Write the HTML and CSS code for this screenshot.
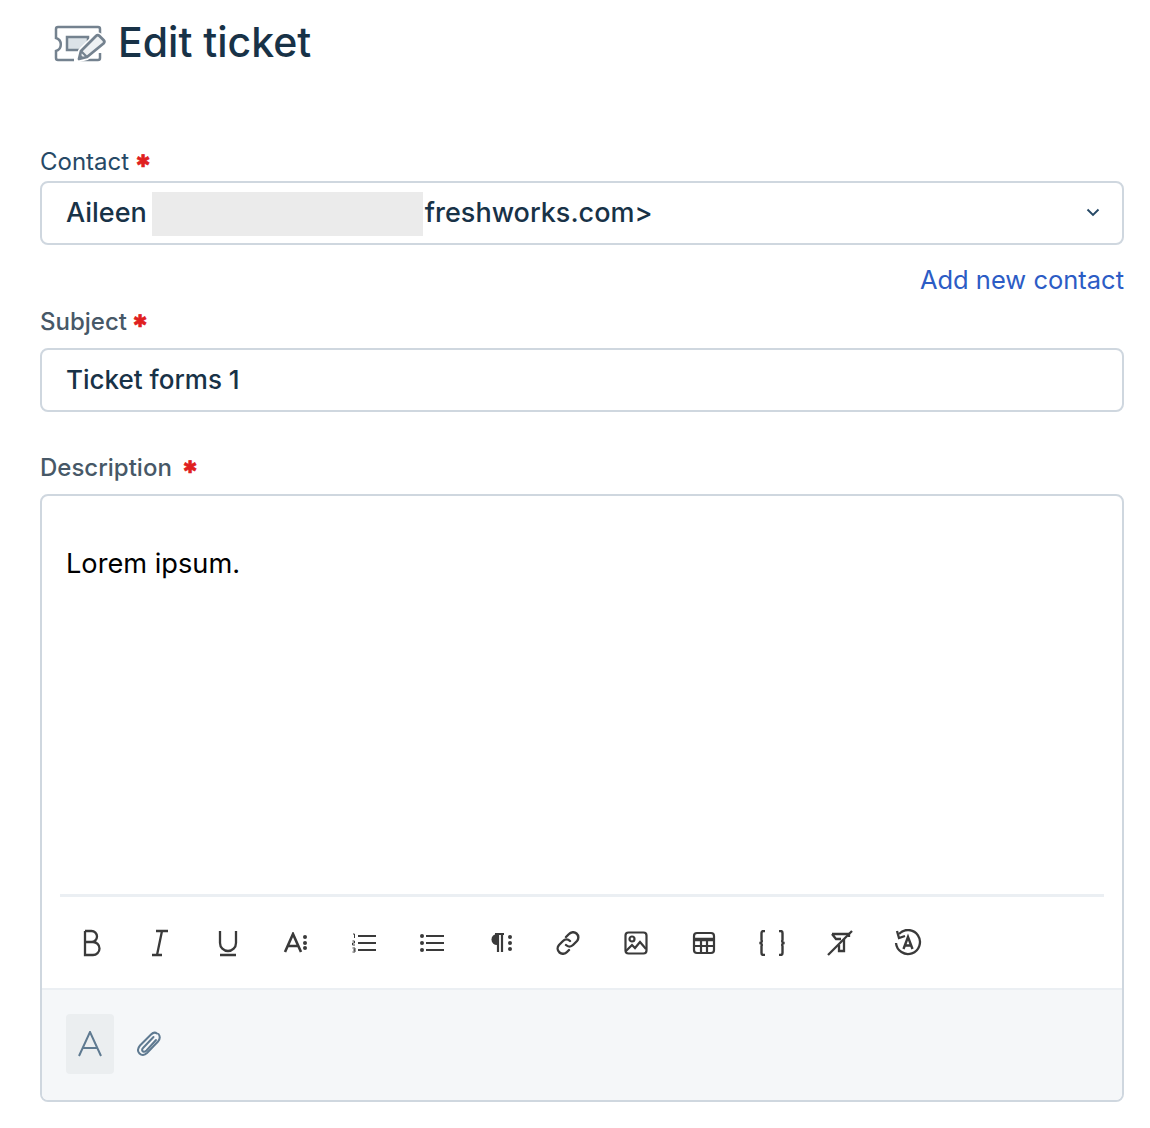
FILE: index.html

```html
<!DOCTYPE html>
<html lang="en">
  <head>
    <meta charset="UTF-8" />
    <title>Edit ticket</title>
    <link rel="stylesheet" href="styles.css">
  </head>
  <body>
    <div class="page-title">
      <svg class="title-icon" width="52" height="40" viewBox="0 0 52 40" fill="none">
        <path d="M46 15V7a2 2 0 0 0-2-2H4a2 2 0 0 0-2 2v9a6.800 6.800 0 0 1 0 13v7a2 2 0 0 0 2 2h16M24 38h20a2 2 0 0 0 2-2v-5" stroke="#74828f" stroke-width="2.500"/>
        <rect x="13" y="15" width="21" height="13" fill="#dce3e8" stroke="#74828f" stroke-width="2.500"/>
        <path d="M25 37l2-8 15-15a2.500 2.500 0 0 1 3.500 0l4 4a2.500 2.500 0 0 1 0 3.500L33 35z" fill="#eef1f3" stroke="#fff" stroke-width="6" stroke-linejoin="round"/>
        <path d="M25 37l2-8 15-15a2.500 2.500 0 0 1 3.500 0l4 4a2.500 2.500 0 0 1 0 3.500L33 35z" fill="#eef1f3" stroke="#74828f" stroke-width="2.800" stroke-linejoin="round"/>
        <path d="M27 29l6 6" stroke="#74828f" stroke-width="2.200"/>
        <path d="M25 37l1-5 4 4z" fill="#74828f"/>
      </svg>
      <h1>Edit ticket</h1>
    </div>

    <div class="form">
      <label class="label label-contact">Contact <span class="req">✱</span></label>
      <div class="input select-input">
        <span>Aileen</span>
        <span class="redacted"></span>
        <span class="email-end">freshworks.com&gt;</span>
        <svg class="chevron" width="14" height="14" viewBox="0 0 14 14" fill="none">
          <path d="M1.500 4.500L7 10l5.500-5.500" stroke="#264966" stroke-width="1.900"/>
        </svg>
      </div>
      <div class="add-contact"><a href="#">Add new contact</a></div>

      <label class="label label-subject">Subject <span class="req">✱</span></label>
      <div class="input subject-input">Ticket forms 1</div>

      <label class="label label-desc">Description <span class="req req-wide">✱</span></label>
      <div class="editor">
        <div class="editor-body">Lorem ipsum.</div>
        <div class="toolbar-line"></div>
        <div class="toolbar">
          <button class="tool">
            <svg width="20" height="28" viewBox="0 0 20 28" fill="none" stroke="#3a3a3a" stroke-width="2.300"><path d="M3 2v24h8a6.500 6.500 0 0 0 0-13H3M3 2h6.500a5.500 5.500 0 0 1 0 11"/></svg>
          </button>
          <button class="tool">
            <svg width="20" height="28" viewBox="0 0 20 28" fill="none" stroke="#3a3a3a" stroke-width="2.300"><path d="M6 2h12M12 2L7 26M2 26h10"/></svg>
          </button>
          <button class="tool">
            <svg width="20" height="28" viewBox="0 0 20 28" fill="none" stroke="#3a3a3a" stroke-width="2.300"><path d="M2 2v12a8 8 0 0 0 16 0V2M2 26h16"/></svg>
          </button>
          <button class="tool">
            <svg width="26" height="22" viewBox="0 0 26 22" fill="none"><path d="M2 20L10 2l8 18M5 14h10" stroke="#3a3a3a" stroke-width="2.600"/><circle cx="22" cy="5" r="2" fill="#3a3a3a"/><circle cx="22" cy="11" r="2" fill="#3a3a3a"/><circle cx="22" cy="16" r="2" fill="#3a3a3a"/></svg>
          </button>
          <button class="tool">
            <svg width="24" height="20" viewBox="0 0 24 20" fill="none"><path d="M6 3h18M6 10h18M6 17h18" stroke="#3a3a3a" stroke-width="2.200"/><path d="M1 1h1.500v4M.5 8h2v2h-2v2h2.500M.5 15h2.500v2h-1.500 1.500v2H.5" stroke="#3a3a3a" stroke-width="1"/></svg>
          </button>
          <button class="tool">
            <svg width="24" height="18" viewBox="0 0 24 18" fill="none"><path d="M6 2h18M6 9h18M6 16h18" stroke="#3a3a3a" stroke-width="2.200"/><circle cx="2" cy="2" r="2" fill="#3a3a3a"/><circle cx="2" cy="9" r="2" fill="#3a3a3a"/><circle cx="2" cy="16" r="2" fill="#3a3a3a"/></svg>
          </button>
          <button class="tool">
            <svg width="26" height="20" viewBox="0 0 26 20" fill="none"><path d="M8 1h9M11 1v18M15 1v18" stroke="#3a3a3a" stroke-width="2.200"/><path d="M10 1a5 5 0 0 0 0 11z" fill="#3a3a3a"/><circle cx="23" cy="4" r="2" fill="#3a3a3a"/><circle cx="23" cy="10" r="2" fill="#3a3a3a"/><circle cx="23" cy="16" r="2" fill="#3a3a3a"/></svg>
          </button>
          <button class="tool">
            <svg width="24" height="24" viewBox="0 0 24 24" fill="none" stroke="#3a3a3a" stroke-width="2.400" stroke-linecap="round"><path d="M10 6l3-3a5 5 0 0 1 8 7l-4 4a5 5 0 0 1-7 0"/><path d="M14 10a5 5 0 0 0-7 0l-4 4a5 5 0 0 0 8 7l2-2"/></svg>
          </button>
          <button class="tool">
            <svg width="24" height="24" viewBox="0 0 24 24" fill="none" stroke="#3a3a3a" stroke-width="2.200"><rect x="1.500" y="1.500" width="21" height="21" rx="3"/><circle cx="8" cy="8" r="2.500"/><path d="M2 20l6-6 3 3 5-6 6 7"/></svg>
          </button>
          <button class="tool">
            <svg width="24" height="24" viewBox="0 0 24 24" fill="none" stroke="#3a3a3a" stroke-width="2.200"><rect x="2" y="2" width="20" height="20" rx="3"/><path d="M2 8.500h20" stroke-width="3.500"/><path d="M2 15h20M9 9v13M15 9v13"/></svg>
          </button>
          <button class="tool">
            <svg width="28" height="26" viewBox="0 0 28 26" fill="none" stroke="#3a3a3a" stroke-width="2.400"><path d="M7 1H5.500a2 2 0 0 0-2 2v7a2 2 0 0 1-2 3 2 2 0 0 1 2 3v7a2 2 0 0 0 2 2H7M21 1h1.500a2 2 0 0 1 2 2v7a2 2 0 0 0 2 3 2 2 0 0 0-2 3v7a2 2 0 0 1-2 2H21"/></svg>
          </button>
          <button class="tool">
            <svg width="26" height="26" viewBox="0 0 26 26" fill="none" stroke="#3a3a3a" stroke-width="2.300"><path d="M1 25L25 1"/><path d="M5 4h17v3M5 4l4 5h5M17 9v12h-5v-6"/></svg>
          </button>
          <button class="tool">
            <svg width="28" height="28" viewBox="0 0 28 28" fill="none" stroke="#3a3a3a" stroke-width="2.300"><path d="M5 5a12 12 0 1 1-3 9"/><path d="M3 2l2 7 6-2"/><path d="M9.500 20l4.500-12 4.500 12M11 16.500h6" stroke-width="2.400"/></svg>
          </button>
        </div>
        <div class="editor-footer">
          <button class="footer-btn">
            <svg width="26" height="26" viewBox="0 0 26 26" fill="none" stroke="#5f7a91" stroke-width="2"><path d="M2 25L13 1l11 24M6 17h14"/></svg>
          </button>
          <button class="clip-btn">
            <svg width="26" height="28" viewBox="0 0 26 28" fill="none" stroke="#5f7a91" stroke-width="2" stroke-linecap="round"><path d="M21 3.500c-2-1.500-4-1-6 1L4 15.500c-2.500 3-2.500 6-.5 8s5 2 7.500-.5L22 11.500c2.500-3 2-5.500.5-7.500"/><path d="M17.500 7L7 18c-1.500 1.500-1 3 0 3.500s2 .5 3.500-1L20 10"/></svg>
          </button>
        </div>
      </div>
    </div>
  </body>
</html>
```

FILE: styles.css

```css
body {
  font-family: Inter, "Liberation Sans", sans-serif;
  background-color: #fff;
  margin: 0;
  padding: 0 26px 26px 40px;
  color: #12344d;
}

.page-title {
  display: flex;
  align-items: center;
  gap: 12px;
  height: 84px;
  padding-left: 14px;
}

.title-icon {
  flex: none;
}

h1 {
  margin: 0;
  font-size: 41px;
  font-weight: 500;
  line-height: 1;
  color: #183247;
}

.form {
  padding-top: 63px;
}

.label {
  display: block;
  font-size: 24px;
  font-weight: 500;
  line-height: 28px;
  color: #475867;
}

.label-contact {
  color: #264966;
  font-weight: 400;
  margin-bottom: 5px;
}

.label-subject {
  margin-bottom: 12px;
}

.label-desc {
  margin-top: 41px;
  margin-bottom: 12px;
}

.req {
  color: #e02020;
  font-size: 17px;
  vertical-align: 3px;
  -webkit-text-stroke: 0.7px #e02020;
}

.req-wide {
  margin-left: 5px;
}

.input {
  display: flex;
  align-items: center;
  height: 64px;
  box-sizing: border-box;
  padding: 0 24px;
  border: 2px solid #cfd7df;
  border-radius: 8px;
  font-size: 27px;
  font-weight: 500;
  color: #183247;
}

.select-input {
  position: relative;
  padding-bottom: 2px;
}

.subject-input {
  font-size: 26px;
  padding-bottom: 2px;
}

.redacted {
  width: 271px;
  height: 44px;
  margin: 4px 0 0 5px;
  background-color: #ebebeb;
  flex: none;
}

.email-end {
  margin-left: 2px;
}

.chevron {
  position: absolute;
  right: 22px;
  top: 22px;
}

.add-contact {
  text-align: right;
  font-size: 25.5px;
  line-height: 30px;
  padding-top: 20px;
  margin-bottom: 12px;
}

.add-contact a {
  color: #2c5cc5;
  text-decoration: none;
}

.editor {
  border: 2px solid #cfd7df;
  border-radius: 8px;
  overflow: hidden;
}

.editor-body {
  height: 398px;
  box-sizing: border-box;
  padding: 51px 24px 0;
  font-size: 27.2px;
  line-height: 34px;
  color: #000;
}

.toolbar-line {
  height: 3px;
  margin: 0 18px;
  background-color: #ebeff3;
}

.toolbar {
  display: flex;
  align-items: center;
  height: 91px;
  padding-left: 16px;
}

.tool {
  width: 68px;
  flex: none;
  display: flex;
  justify-content: center;
  align-items: center;
  background: none;
  border: none;
  padding: 0;
}

.editor-footer {
  display: flex;
  align-items: center;
  gap: 22px;
  height: 112px;
  box-sizing: border-box;
  padding: 0 24px 2px;
  background-color: #f5f7f9;
  border-top: 2px solid #ebeff3;
}

.footer-btn {
  width: 48px;
  height: 60px;
  display: flex;
  justify-content: center;
  align-items: center;
  background-color: #ebeef0;
  border: none;
  border-radius: 4px;
}

.clip-btn {
  display: flex;
  background: none;
  border: none;
  padding: 0;
}
```
